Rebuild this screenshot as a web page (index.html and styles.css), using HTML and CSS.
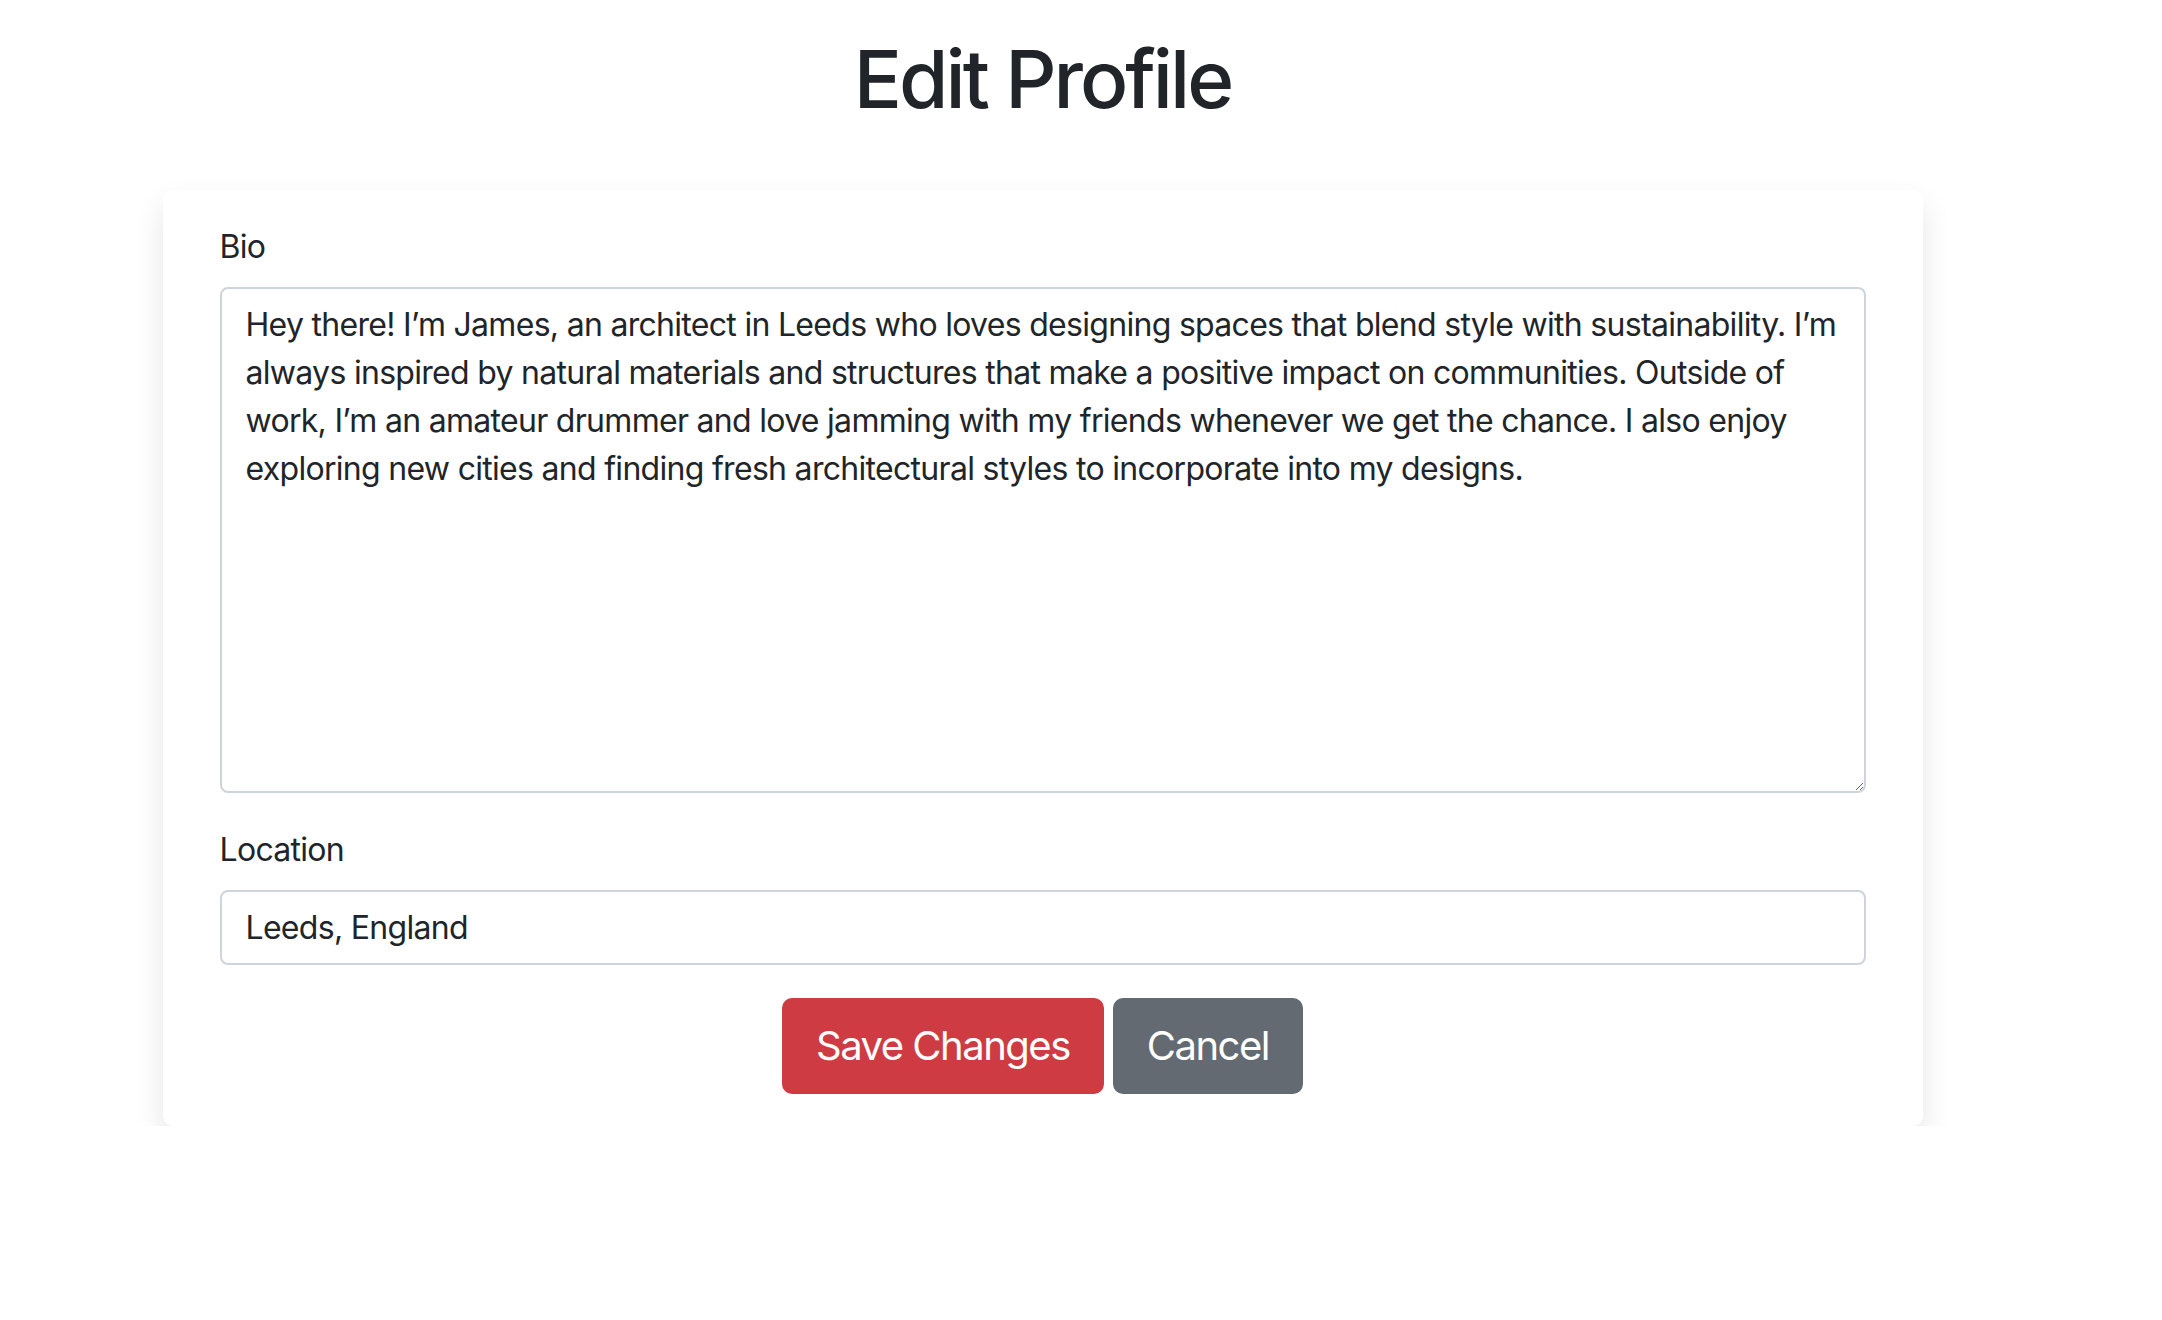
FILE: index.html
```html
<!DOCTYPE html>
<html lang="en">
<head>
<meta charset="utf-8">
<title>Edit Profile</title>
<link rel="stylesheet" href="styles.css">
</head>
<body>
<div class="page">
  <h1 class="title">Edit Profile</h1>
  <form class="card">
    <div class="form-group">
      <label class="label" for="bio">Bio</label>
      <textarea class="control textarea" id="bio">Hey there! I’m James, an architect in Leeds who loves designing spaces that blend style with sustainability. I’m always inspired by natural materials and structures that make a positive impact on communities. Outside of work, I’m an amateur drummer and love jamming with my friends whenever we get the chance. I also enjoy exploring new cities and finding fresh architectural styles to incorporate into my designs.</textarea>
    </div>
    <div class="form-group">
      <label class="label" for="loc">Location</label>
      <input class="control input" id="loc" type="text" value="Leeds, England">
    </div>
    <div class="actions">
      <button type="button" class="btn btn-danger">Save Changes</button>
      <button type="button" class="btn btn-secondary">Cancel</button>
    </div>
  </form>
</div>
</body>
</html>
```

FILE: styles.css
```css
html, body {
  margin: 0;
  padding: 0;
  background: #ffffff;
}

body {
  font-family: Inter, "Liberation Sans", Arial, sans-serif;
  font-size: 32px;
  line-height: 1.5;
  color: #212529;
  letter-spacing: -0.7px;
}

.page {
  width: 2085px;
  display: flex;
  flex-direction: column;
  align-items: center;
}

.title {
  margin: 31px 0 63px;
  font-size: 80px;
  font-weight: 500;
  line-height: 96px;
  color: #212529;
  letter-spacing: -3px;
}

.card {
  box-sizing: border-box;
  width: 1760px;
  padding: 33px 57px 32px;
  background: #fff;
  border-radius: 10px;
  box-shadow: 0 14px 30px rgba(0, 0, 0, 0.10);
  display: flex;
  flex-direction: column;
}

.form-group {
  display: flex;
  flex-direction: column;
  margin-bottom: 33px;
}

.label {
  display: block;
  margin-bottom: 16px;
  line-height: 48px;
}

.control {
  box-sizing: border-box;
  width: 100%;
  margin: 0;
  font-family: inherit;
  font-size: 32px;
  line-height: 48px;
  letter-spacing: -0.7px;
  color: #212529;
  background: #fff;
  border: 2px solid #ced4da;
  border-radius: 8px;
  padding: 12px 24px;
  outline: none;
}

.textarea {
  height: 506px;
  resize: vertical;
  display: block;
}

.input {
  height: 75px;
}

.actions {
  display: flex;
  justify-content: center;
  gap: 9px;
}

.btn {
  font-family: inherit;
  font-size: 40px;
  line-height: 60px;
  letter-spacing: -1.5px;
  padding: 16px 32px;
  border: 2px solid transparent;
  border-radius: 10px;
  color: #fff;
  cursor: pointer;
}

.btn-danger {
  background: #cf3b42;
  border-color: #cf3b42;
}

.btn-secondary {
  background: #636a71;
  border-color: #636a71;
}
```
